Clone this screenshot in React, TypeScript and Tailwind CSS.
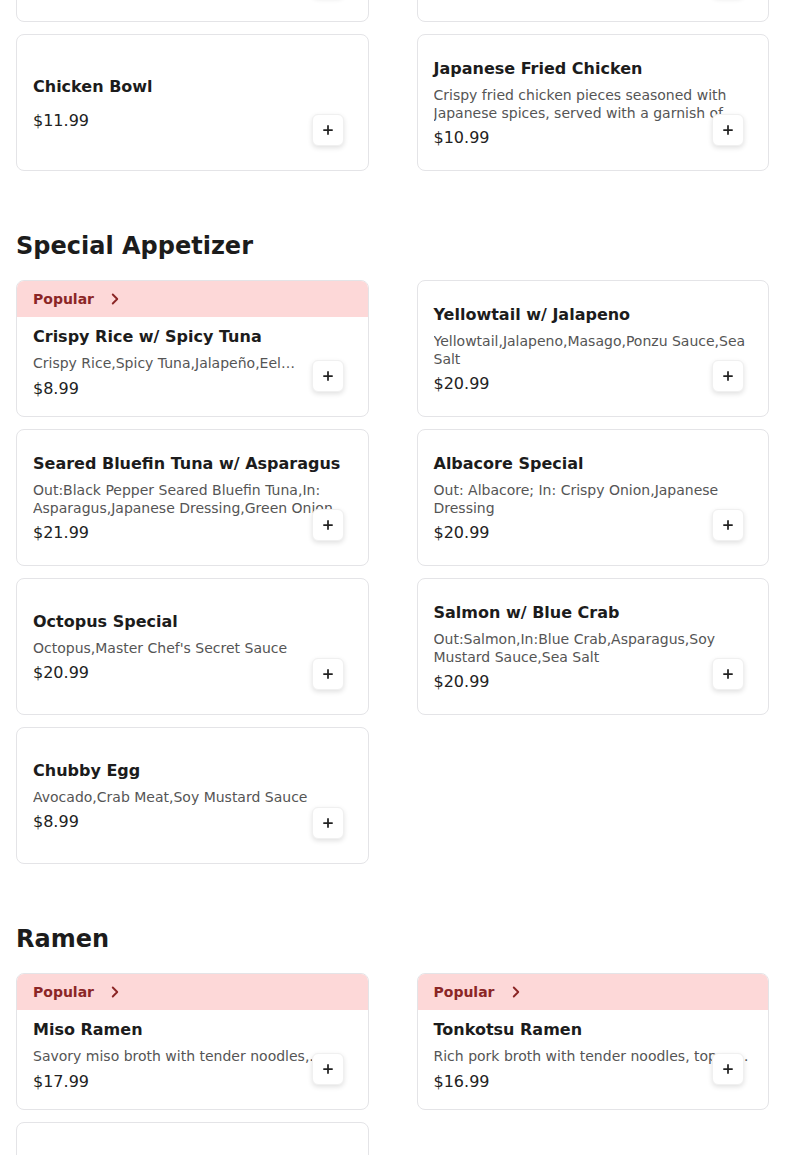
import React from 'react'
import { ChevronRight, Plus } from 'lucide-react'

interface MenuItem {
    name: string
    description?: string
    price: string
    popular?: boolean
}

interface MenuSectionProps {
    title?: string
    items: MenuItem[]
    className?: string
}

const previousItems: MenuItem[] = [
    { name: 'Teriyaki Chicken Bowl', price: '$12.99' },
    { name: 'Beef Bowl', price: '$13.99' },
]

const riceItems: MenuItem[] = [
    { name: 'Chicken Bowl', price: '$11.99' },
    {
        name: 'Japanese Fried Chicken',
        description:
            'Crispy fried chicken pieces seasoned with Japanese spices, served with a garnish of fresh lettuce and lemon.',
        price: '$10.99',
    },
]

const appetizerItems: MenuItem[] = [
    {
        name: 'Crispy Rice w/ Spicy Tuna',
        description: 'Crispy Rice,Spicy Tuna,Jalapeño,Eel Sauce,Spicy Mayo',
        price: '$8.99',
        popular: true,
    },
    {
        name: 'Yellowtail w/ Jalapeno',
        description: 'Yellowtail,Jalapeno,Masago,Ponzu Sauce,Sea Salt',
        price: '$20.99',
    },
    {
        name: 'Seared Bluefin Tuna w/ Asparagus',
        description:
            'Out:Black Pepper Seared Bluefin Tuna,In: Asparagus,Japanese Dressing,Green Onion',
        price: '$21.99',
    },
    {
        name: 'Albacore Special',
        description: 'Out: Albacore; In: Crispy Onion,Japanese Dressing',
        price: '$20.99',
    },
    {
        name: 'Octopus Special',
        description: "Octopus,Master Chef's Secret Sauce",
        price: '$20.99',
    },
    {
        name: 'Salmon w/ Blue Crab',
        description: 'Out:Salmon,In:Blue Crab,Asparagus,Soy Mustard Sauce,Sea Salt',
        price: '$20.99',
    },
    {
        name: 'Chubby Egg',
        description: 'Avocado,Crab Meat,Soy Mustard Sauce',
        price: '$8.99',
    },
]

const ramenItems: MenuItem[] = [
    {
        name: 'Miso Ramen',
        description:
            'Savory miso broth with tender noodles, chashu-style pork, corn and scallions.',
        price: '$17.99',
        popular: true,
    },
    {
        name: 'Tonkotsu Ramen',
        description:
            'Rich pork broth with tender noodles, topped with chashu, egg and scallions.',
        price: '$16.99',
        popular: true,
    },
    { name: 'Shoyu Ramen', price: '$16.99' },
]

const MenuCard: React.FC<{ item: MenuItem }> = ({ item }) => {
    return (
        <div className="relative flex h-[137px] flex-col overflow-hidden rounded-lg border border-[#e4e4e7] bg-white">
            {item.popular && (
                <div className="flex items-center gap-3 bg-[#fdd8d8] px-4 py-2 text-sm leading-5 font-bold text-[#8b2626]">
                    <span>Popular</span>
                    <ChevronRight size={18} strokeWidth={2.5} />
                </div>
            )}
            <div
                className={`flex flex-1 flex-col px-4 ${
                    item.popular ? 'justify-start pt-2' : 'justify-center pt-[2px]'
                }`}
            >
                <p className="mb-1.5 text-base leading-6 font-bold text-[#1c1c1c]">
                    {item.name}
                </p>
                <p
                    className={`text-sm leading-[17.5px] text-[#555555] ${
                        item.popular ? 'line-clamp-1' : 'line-clamp-2'
                    }`}
                >
                    {item.description}
                </p>
                <p className="mt-1 text-base leading-6 text-[#222222]">
                    {item.price}
                </p>
            </div>
            <button className="absolute right-6 bottom-6 flex h-8 w-8 items-center justify-center rounded-md border border-[#f0f0f0] bg-white text-[#222222] shadow-[0_2px_5px_rgba(0,0,0,0.12)]">
                <Plus size={14} strokeWidth={3} />
            </button>
        </div>
    )
}

const MenuSection: React.FC<MenuSectionProps> = ({ title, items, className }) => {
    return (
        <div className={className}>
            {title && (
                <h2 className="mb-[18px] text-2xl leading-8 font-bold text-[#1c1c1c]">
                    {title}
                </h2>
            )}
            <div className="grid grid-cols-2 gap-x-12 gap-y-3">
                {items.map((item, index) => (
                    <MenuCard key={index} item={item} />
                ))}
            </div>
        </div>
    )
}

const App = () => {
    return (
        <div className="h-[1155px] overflow-hidden bg-white font-['DejaVu_Sans',sans-serif]">
            <div className="px-4">
                <MenuSection
                    items={[...previousItems, ...riceItems]}
                    className="-mt-[115px]"
                />
                <MenuSection
                    title="Special Appetizer"
                    items={appetizerItems}
                    className="mt-[59px]"
                />
                <MenuSection
                    title="Ramen"
                    items={ramenItems}
                    className="mt-[59px]"
                />
            </div>
        </div>
    )
}

export default App
